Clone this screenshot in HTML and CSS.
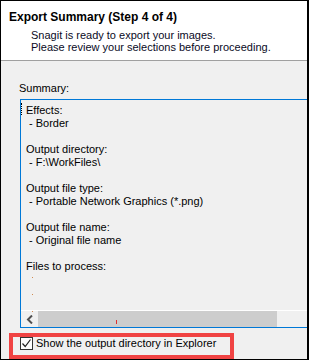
FILE: index.html
```html
<!DOCTYPE html>
<html lang="en">
<head>
  <meta charset="UTF-8">
  <title>Export Summary</title>
  <link rel="stylesheet" href="styles.css">
</head>
<body>
  <div class="dialog">
    <div class="header">
      <div class="title">Export Summary (Step 4 of 4)</div>
      <div class="subtitle">Snagit is ready to export your images.</div>
      <div class="subtitle">Please review your selections before proceeding.</div>
    </div>

    <div class="content">
      <div class="label">Summary:</div>

      <div class="listbox">
        <div class="list-text">
          <span class="caret"></span>
          <div class="line">Effects:</div>
          <div class="line item">- Border</div>
          <div class="line"></div>
          <div class="line">Output directory:</div>
          <div class="line item">- F:\WorkFiles\</div>
          <div class="line"></div>
          <div class="line">Output file type:</div>
          <div class="line item">- Portable Network Graphics (*.png)</div>
          <div class="line"></div>
          <div class="line">Output file name:</div>
          <div class="line item">- Original file name</div>
          <div class="line"></div>
          <div class="line">Files to process:</div>
          <div class="line"><span class="dot"></span></div>
          <div class="line"><span class="dot"></span></div>
          <div class="line"><span class="dot"></span></div>
        </div>
        <div class="hscroll">
          <div class="arrow">
            <svg width="8" height="9" viewBox="0 0 8 9"><path d="M6 0.5 L2 4.5 L6 8.5" fill="none" stroke="#505050" stroke-width="2"/></svg>
          </div>
          <div class="thumb"><span class="tick"></span></div>
        </div>
      </div>

      <div class="check-row">
        <span class="checkbox">
          <svg width="11" height="11" viewBox="0 0 11 11"><path d="M1.5 5.5 L4.2 8.5 L9.5 1.5" fill="none" stroke="#222" stroke-width="1.2"/></svg>
        </span>
        <span class="check-label">Show the output directory in Explorer</span>
      </div>
    </div>
  </div>
</body>
</html>
```

FILE: styles.css
```css
body {
  margin: 0;
  font-family: "Liberation Sans", Arial, sans-serif;
  font-size: 11px;
  color: #000;
}
.dialog {
  width: 306px;
  height: 358px;
  border: 1px solid #000;
  border-right-width: 2px;
  background: #f0f0f0;
  overflow: hidden;
  position: relative;
}
.header {
  background: #fff;
  height: 49px;
  padding: 10px 0 0 8px;
  border-bottom: 1px solid #a0a0a0;
}
.title {
  font-weight: bold;
  font-size: 12px;
  line-height: 13px;
  margin-bottom: 5px;
  white-space: nowrap;
}
.subtitle {
  line-height: 12px;
  padding-left: 22px;
  color: #0a0a1e;
  white-space: nowrap;
}
.content {
  padding: 21px 0 0 18px;
}
.label {
  line-height: 13px;
  margin-bottom: 4px;
}
.listbox {
  margin-left: 1px;
  width: 310px;
  border: 1px solid #0078d7;
  display: flex;
  flex-direction: column;
}
.list-text {
  height: 206px;
  padding: 4px 0 0 5px;
  position: relative;
}
.line {
  height: 13px;
  line-height: 13px;
  white-space: nowrap;
}
.item {
  padding-left: 3px;
}
.dot {
  display: block;
  width: 1px;
  height: 1px;
  background: #d08a50;
  margin: 4px 0 0 6px;
}
.caret {
  position: absolute;
  left: 0;
  top: 3px;
  height: 12px;
  border-left: 1px dotted #000;
}
.hscroll {
  display: flex;
  height: 16px;
  border-top: 1px solid #fff;
}
.arrow {
  width: 17px;
  display: flex;
  align-items: center;
  justify-content: center;
}
.thumb {
  width: 239px;
  background: #cdcdcd;
  position: relative;
}
.tick {
  position: absolute;
  left: 78px;
  top: 9px;
  width: 1px;
  height: 4px;
  background: #e03030;
}
.check-row {
  margin: 5px 0 0 -10px;
  width: 217px;
  height: 18px;
  border: 4px solid #f04343;
  display: flex;
  align-items: flex-start;
}
.checkbox {
  width: 11px;
  height: 11px;
  margin-left: 7px;
  border: 1px solid #333;
  background: #fff;
  display: flex;
}
.check-label {
  margin-left: 3px;
  line-height: 13px;
  white-space: nowrap;
}
```
